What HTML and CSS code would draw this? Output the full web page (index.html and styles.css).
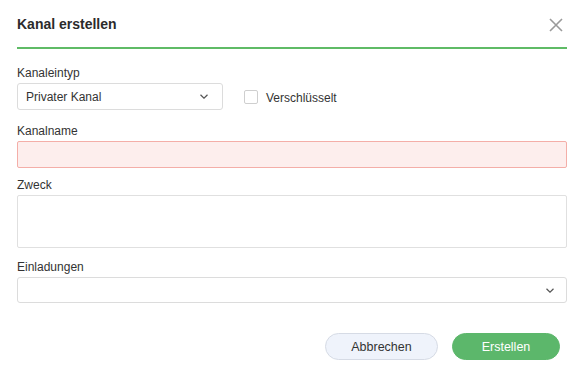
FILE: index.html
```html
<!DOCTYPE html>
<html lang="de">
<head>
<meta charset="utf-8">
<title>Kanal erstellen</title>
<link rel="stylesheet" href="styles.css">
</head>
<body>
<div class="dialog">
  <div class="header">
    <h1 class="title">Kanal erstellen</h1>
    <svg class="close" width="14" height="14" viewBox="0 0 14 14"><path d="M1 1 L13 13 M13 1 L1 13" stroke="#9a9a9a" stroke-width="1.6" fill="none"/></svg>
  </div>

  <div class="group g1">
    <label class="label">Kanaleintyp</label>
    <div class="row">
      <div class="select type-select">
        <span>Privater Kanal</span>
        <svg class="chev" width="8" height="5" viewBox="0 0 8 5"><path d="M0.5 0.8 L4 4.2 L7.5 0.8" stroke="#555" stroke-width="1.2" fill="none"/></svg>
      </div>
      <span class="checkbox"></span>
      <span class="check-label">Verschlüsselt</span>
    </div>
  </div>

  <div class="group g2">
    <label class="label">Kanalname</label>
    <div class="input error"></div>
  </div>

  <div class="group g3">
    <label class="label">Zweck</label>
    <div class="textarea"></div>
  </div>

  <div class="group g4">
    <label class="label">Einladungen</label>
    <div class="select invite-select">
      <span></span>
      <svg class="chev" width="8" height="5" viewBox="0 0 8 5"><path d="M0.5 0.8 L4 4.2 L7.5 0.8" stroke="#555" stroke-width="1.2" fill="none"/></svg>
    </div>
  </div>

  <div class="footer">
    <button class="btn btn-cancel">Abbrechen</button>
    <button class="btn btn-primary">Erstellen</button>
  </div>
</div>
</body>
</html>
```
FILE: styles.css
```css
html, body {
  margin: 0;
  padding: 0;
  background: #ffffff;
}
body {
  font-family: "Liberation Sans", Arial, sans-serif;
  color: #333333;
}
.dialog {
  padding: 0 18px 0 17px;
}
.header {
  display: flex;
  justify-content: space-between;
  align-items: center;
  padding: 14px 0 13px;
  border-bottom: 2px solid #5fbb66;
}
.title {
  margin: 0;
  font-size: 14px;
  line-height: 20px;
  font-weight: bold;
  color: #2b2b2b;
}
.close {
  display: block;
  margin-right: 4px;
  margin-top: 1px;
}
.label {
  display: block;
  font-size: 12px;
  line-height: 18px;
  margin-bottom: 1px;
  color: #333333;
}
.g1 { margin-top: 15px; }
.g2 { margin-top: 12px; }
.g3 { margin-top: 8px; }
.g4 { margin-top: 10px; }
.row {
  display: flex;
  align-items: center;
}
.select {
  box-sizing: border-box;
  display: flex;
  align-items: center;
  justify-content: space-between;
  border: 1px solid #dcdcdc;
  border-radius: 3px;
  background: #fff;
  font-size: 12px;
  color: #333;
}
.type-select {
  width: 206px;
  height: 27px;
  padding: 0 14px 0 8px;
}
.invite-select {
  height: 26px;
  padding: 0 12px 0 8px;
}
.chev { display: block; }
.checkbox {
  box-sizing: border-box;
  width: 14px;
  height: 14px;
  border: 1px solid #cfcfcf;
  border-radius: 2px;
  margin-left: 21px;
  margin-top: 1px;
}
.check-label {
  font-size: 12px;
  margin-left: 8px;
  margin-top: 2px;
  color: #333;
}
.input {
  box-sizing: border-box;
  height: 27px;
  border: 1px solid #dcdcdc;
  border-radius: 2px;
}
.input.error {
  background: #fdeeed;
  border-color: #f4aea8;
}
.textarea {
  box-sizing: border-box;
  height: 53px;
  border: 1px solid #e0e0e0;
  border-radius: 2px;
}
.footer {
  display: flex;
  justify-content: flex-end;
  gap: 14px;
  margin-top: 30px;
  padding-right: 7px;
}
.btn {
  box-sizing: border-box;
  height: 27px;
  border-radius: 14px;
  font-family: "Liberation Sans", Arial, sans-serif;
  font-size: 12.5px;
  padding: 0;
  cursor: pointer;
}
.btn-cancel {
  width: 113px;
  background: #eff3fb;
  border: 1px solid #d6dbe5;
  color: #333;
}
.btn-primary {
  width: 108px;
  background: #5cb76b;
  border: 1px solid #5cb76b;
  color: #ffffff;
}
```
